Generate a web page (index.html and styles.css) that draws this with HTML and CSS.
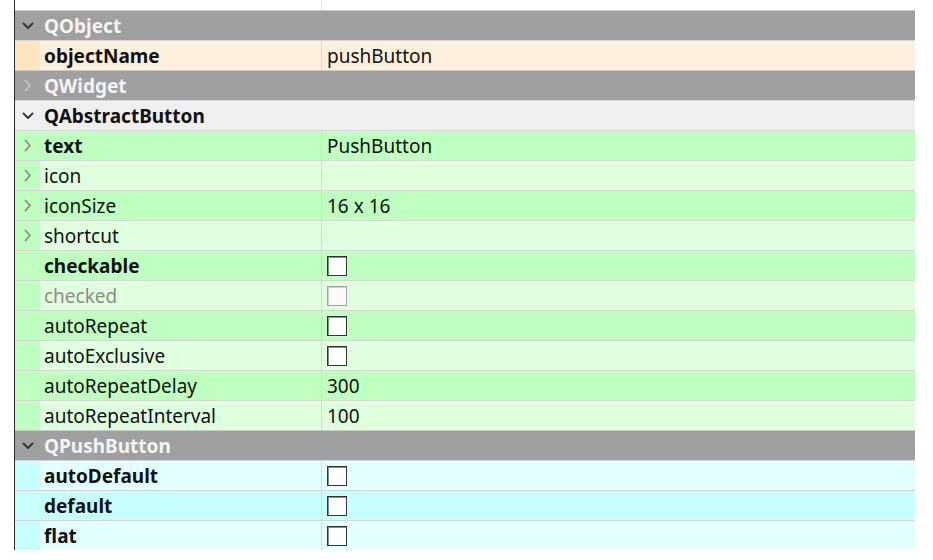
FILE: index.html
```html
<!DOCTYPE html>
<html lang="en">

<head>
    <meta charset="UTF-8">
    <title>Property Editor</title>
    <link rel="stylesheet" href="styles.css">
</head>

<body>
    <div class="props">
        <div class="props-head"><span class="head-split"></span></div>

        <!-- QObject -->
        <div class="group">
            <span class="branch"><svg class="arrow-down" viewBox="0 0 12 8"><polyline points="1.5,1.5 6,6 10.5,1.5" /></svg></span>
            <span class="group-name">QObject</span>
        </div>
        <div class="row orange light">
            <span class="branch"></span>
            <span class="name bold">objectName</span>
            <span class="value">pushButton</span>
        </div>

        <!-- QWidget -->
        <div class="group">
            <span class="branch"><svg class="arrow-right faded" viewBox="0 0 8 13"><polyline points="1.5,1.5 6,6.5 1.5,11.5" /></svg></span>
            <span class="group-name">QWidget</span>
        </div>

        <!-- QAbstractButton -->
        <div class="group hover">
            <span class="branch"><svg class="arrow-down" viewBox="0 0 12 8"><polyline points="1.5,1.5 6,6 10.5,1.5" /></svg></span>
            <span class="group-name">QAbstractButton</span>
        </div>
        <div class="row green">
            <span class="branch"><svg class="arrow-right" viewBox="0 0 8 13"><polyline points="1.5,1.5 6,6.5 1.5,11.5" /></svg></span>
            <span class="name bold">text</span>
            <span class="value">PushButton</span>
        </div>
        <div class="row green light">
            <span class="branch"><svg class="arrow-right" viewBox="0 0 8 13"><polyline points="1.5,1.5 6,6.5 1.5,11.5" /></svg></span>
            <span class="name">icon</span>
            <span class="value"></span>
        </div>
        <div class="row green">
            <span class="branch"><svg class="arrow-right" viewBox="0 0 8 13"><polyline points="1.5,1.5 6,6.5 1.5,11.5" /></svg></span>
            <span class="name">iconSize</span>
            <span class="value">16 x 16</span>
        </div>
        <div class="row green light">
            <span class="branch"><svg class="arrow-right" viewBox="0 0 8 13"><polyline points="1.5,1.5 6,6.5 1.5,11.5" /></svg></span>
            <span class="name">shortcut</span>
            <span class="value"></span>
        </div>
        <div class="row green">
            <span class="branch"></span>
            <span class="name bold">checkable</span>
            <span class="value"><span class="check"></span></span>
        </div>
        <div class="row green light">
            <span class="branch"></span>
            <span class="name disabled">checked</span>
            <span class="value"><span class="check off"></span></span>
        </div>
        <div class="row green">
            <span class="branch"></span>
            <span class="name">autoRepeat</span>
            <span class="value"><span class="check"></span></span>
        </div>
        <div class="row green light">
            <span class="branch"></span>
            <span class="name">autoExclusive</span>
            <span class="value"><span class="check"></span></span>
        </div>
        <div class="row green">
            <span class="branch"></span>
            <span class="name">autoRepeatDelay</span>
            <span class="value">300</span>
        </div>
        <div class="row green light">
            <span class="branch"></span>
            <span class="name">autoRepeatInterval</span>
            <span class="value">100</span>
        </div>

        <!-- QPushButton -->
        <div class="group">
            <span class="branch"><svg class="arrow-down" viewBox="0 0 12 8"><polyline points="1.5,1.5 6,6 10.5,1.5" /></svg></span>
            <span class="group-name">QPushButton</span>
        </div>
        <div class="row cyan light">
            <span class="branch"></span>
            <span class="name bold">autoDefault</span>
            <span class="value"><span class="check"></span></span>
        </div>
        <div class="row cyan">
            <span class="branch"></span>
            <span class="name bold">default</span>
            <span class="value"><span class="check"></span></span>
        </div>
        <div class="row cyan light">
            <span class="branch"></span>
            <span class="name bold">flat</span>
            <span class="value"><span class="check"></span></span>
        </div>
    </div>
</body>

</html>
```

FILE: styles.css
```css
* {
    margin: 0;
    padding: 0;
    box-sizing: border-box;
}

body {
    background-color: white;
    font-family: 'Noto Sans', 'Open Sans', sans-serif;
    font-size: 19px;
    color: #111;
}

.props {
    margin-left: 14px;
    width: 901px;
    border-left: 1px solid #2a2a2a;
}

.props-head {
    height: 10px;
    position: relative;
}

.head-split {
    position: absolute;
    left: 306px;
    top: 0;
    width: 1px;
    height: 10px;
    background-color: #e6e6e6;
}

.group,
.row {
    display: flex;
    height: 30px;
    border-top: 1px solid #d6d6d6;
    line-height: 31px;
    white-space: nowrap;
}

.group {
    background-color: #a0a0a0;
    border-top-color: #c8c8c8;
}

.group.hover {
    background-color: #efefef;
    border-top-color: #d8d8d8;
}

.group-name {
    padding-left: 4px;
    font-weight: 700;
    color: #f4f4f4;
}

.group.hover .group-name {
    color: #111;
}

.branch {
    width: 25px;
    flex: none;
    display: flex;
    align-items: center;
    justify-content: center;
    padding-left: 1px;
}

.branch svg {
    fill: none;
    stroke-width: 1.8;
    stroke-linecap: round;
    stroke-linejoin: round;
}

.arrow-down {
    width: 12px;
    height: 8px;
    margin-top: 1px;
    stroke: #333;
    stroke-width: 2;
}

.arrow-right {
    width: 8px;
    height: 13px;
    stroke: #8a8a8a;
}

.arrow-right.faded {
    stroke: #c4c4c4;
}

.name {
    width: 281px;
    flex: none;
    padding-left: 4px;
}

.bold {
    font-weight: 700;
}

.disabled {
    color: #8c8c8c;
}

.value {
    flex: 1;
    padding-left: 5px;
    border-left: 1px solid #d8d8d8;
}

/* colour bands per class group, the branch strip keeps the strong shade */
.orange { background-color: #ffe6bf; }
.orange.light .name,
.orange.light .value { background-color: #fff0de; }

.green { background-color: #bfffbf; }
.green.light .name,
.green.light .value { background-color: #dfffdf; }

.cyan { background-color: #c7ffff; }
.cyan.light .name,
.cyan.light .value { background-color: #e3ffff; }

.check {
    display: block;
    width: 20px;
    height: 20px;
    margin-top: 5px;
    background-color: white;
    border: 1px solid #333;
    box-shadow: inset 1px 1px 0 #8a8a8a;
}

.check.off {
    border-color: #a4a4a4;
    background-color: #fafafa;
    box-shadow: inset 1px 1px 0 #d0d0d0;
}
```
